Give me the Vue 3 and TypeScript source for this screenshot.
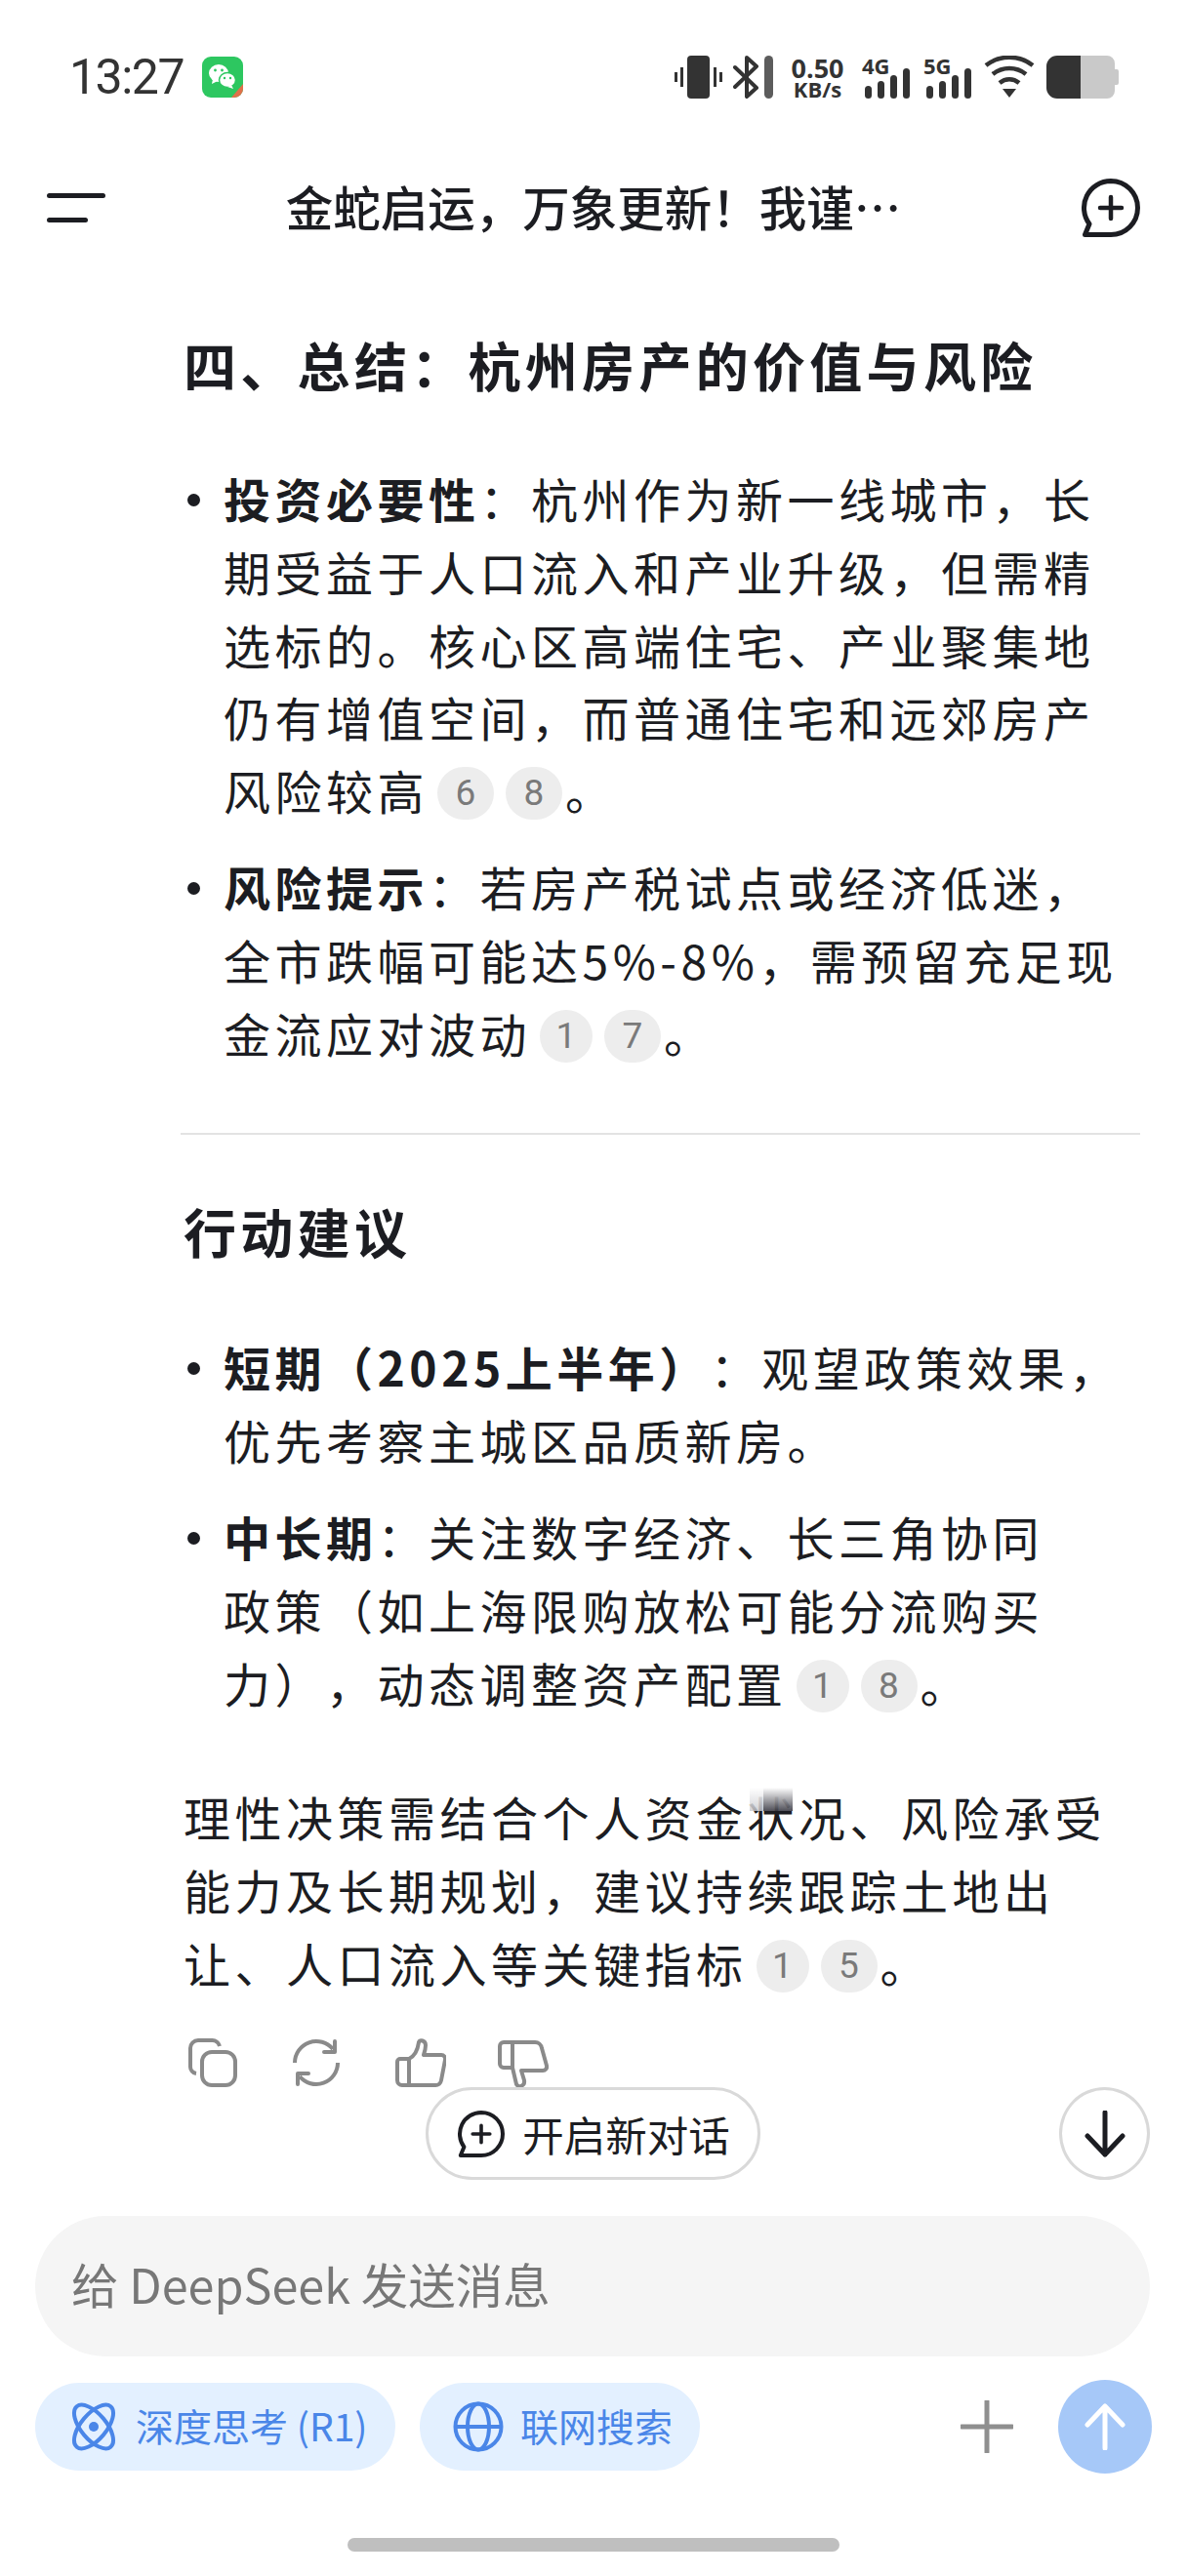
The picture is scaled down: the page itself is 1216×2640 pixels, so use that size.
<script setup lang="ts">
type Seg = { t: string; b?: boolean } | { c: string; w: number };

const list1: Seg[][] = [
  [{ t: "投资必要性", b: true }, { t: "：杭州作为新一线城市，长\n期受益于人口流入和产业升级，但需精\n选标的。核心区高端住宅、产业聚集地\n仍有增值空间，而普通住宅和远郊房产\n风险较高" }, { c: "6", w: 58 }, { c: "8", w: 58 }, { t: "。" }],
  [{ t: "风险提示", b: true }, { t: "：若房产税试点或经济低迷，\n全市跌幅可能达5%-8%，需预留充足现\n金流应对波动" }, { c: "1", w: 54 }, { c: "7", w: 58 }, { t: "。" }],
];
const list2: Seg[][] = [
  [{ t: "短期（2025上半年）", b: true }, { t: "：观望政策效果，\n优先考察主城区品质新房。" }],
  [{ t: "中长期", b: true }, { t: "：关注数字经济、长三角协同\n政策（如上海限购放松可能分流购买\n力），动态调整资产配置" }, { c: "1", w: 54 }, { c: "8", w: 58 }, { t: "。" }],
];
</script>

<template>
  <div class="page">
    <div class="status">
      <div class="status-left">
        <span class="time">13:27</span>
        <svg class="wechat" width="42" height="42" viewBox="0 0 42 42">
          <rect width="42" height="42" rx="9" fill="#2dc760" />
          <path d="M42 28v5a9 9 0 0 1-9 9h-3z" fill="#e0704a" />
          <ellipse cx="17" cy="17" rx="10" ry="9" fill="#fff" />
          <path d="M11 23l-1 5 6-3z" fill="#fff" />
          <ellipse cx="26" cy="24" rx="8.5" ry="7.5" fill="#fff" stroke="#2dc760" stroke-width="1.5" />
          <path d="M30 29l2 4-6-2z" fill="#fff" />
          <circle cx="13.5" cy="14" r="1.4" fill="#2dc760" />
          <circle cx="20.5" cy="14" r="1.4" fill="#2dc760" />
          <circle cx="23" cy="22" r="1.2" fill="#2dc760" />
          <circle cx="29" cy="22" r="1.2" fill="#2dc760" />
        </svg>
      </div>
      <div class="status-right">
        <svg width="49" height="44" viewBox="0 0 49 44" class="s-vib">
          <rect x="13" width="23" height="44" rx="4" fill="#333" />
          <path d="M1.5 17v10M7.5 12v20M41.5 12v20M47.5 17v10" stroke="#333" stroke-width="3" />
        </svg>
        <svg width="41" height="44" viewBox="0 0 41 44" class="s-bt">
          <path d="M2 12l22 21-10 9V2l10 9L2 32" fill="none" stroke="#333" stroke-width="4" stroke-linejoin="round" stroke-linecap="round" />
          <rect x="32" y="0" width="9" height="44" rx="4.5" fill="#5c5c5c" />
        </svg>
        <div class="speed"><span class="speed-a">0.50</span><span class="speed-b">KB/s</span></div>
        <div class="sig sig-4">
          <span class="sig-t">4G</span>
          <svg width="50" height="44" viewBox="0 0 50 44">
            <rect x="3" y="31" width="7" height="13" rx="3.5" fill="#333" />
            <rect x="16" y="26" width="7" height="18" rx="3.5" fill="#333" />
            <rect x="29" y="20" width="7" height="24" rx="3.5" fill="#333" />
            <rect x="42" y="13" width="7" height="31" rx="3.5" fill="#333" />
          </svg>
        </div>
        <div class="sig sig-5">
          <span class="sig-t">5G</span>
          <svg width="50" height="44" viewBox="0 0 50 44">
            <rect x="3" y="31" width="7" height="13" rx="3.5" fill="#333" />
            <rect x="16" y="26" width="7" height="18" rx="3.5" fill="#333" />
            <rect x="29" y="20" width="7" height="24" rx="3.5" fill="#333" />
            <rect x="42" y="13" width="7" height="31" rx="3.5" fill="#333" />
          </svg>
        </div>
        <svg width="52" height="44" viewBox="0 0 52 44" class="s-wifi">
          <path d="M2 10C16 -1 36 -1 50 10M9 19C19 11 33 11 43 19M16 28C22 23 30 23 36 28" fill="none" stroke="#333" stroke-width="4.5" />
          <path d="M19 34h14l-7 9z" fill="#333" />
        </svg>
        <svg width="74" height="44" viewBox="0 0 74 44" class="s-bat">
          <path d="M35 0h27a8 8 0 0 1 8 8v6h2a2 2 0 0 1 2 2v12a2 2 0 0 1-2 2h-2v6a8 8 0 0 1-8 8H35z" fill="#c9c9c9" />
          <path d="M35 0H11A11 11 0 0 0 0 11v22a11 11 0 0 0 11 11h24z" fill="#333" />
        </svg>
      </div>
    </div>

    <header class="top">
      <svg width="60" height="30" viewBox="0 0 60 30" class="menu">
        <rect y="0" width="60" height="5" rx="2.5" fill="#1c1d22" />
        <rect y="25" width="42" height="5" rx="2.5" fill="#1c1d22" />
      </svg>
      <div class="title">金蛇启运，万象更新！我谨…</div>
      <svg width="60" height="60" viewBox="0 0 60 60" class="newchat">
        <path d="M30 2.500a27.500 27.500 0 0 1 0 55H3.500l4.500-11A27.500 27.500 0 0 1 30 2.500z" fill="none" stroke="#1c1d22" stroke-width="5" stroke-linejoin="round" />
        <path d="M30 19v22M19 30h22" stroke="#1c1d22" stroke-width="4.500" stroke-linecap="round" />
      </svg>
    </header>

    <main class="content">
      <h2 class="h-first">四、总结：杭州房产的价值与风险</h2>
      <ul class="list">
        <li v-for="(item, i) in list1" :key="i">
          <template v-for="(s, j) in item" :key="j">
            <b v-if="'t' in s && s.b">{{ s.t }}</b>
            <template v-else-if="'t' in s">{{ s.t }}</template>
            <span v-else class="cite" :style="{ width: s.w + 'px' }">{{ s.c }}</span>
          </template>
        </li>
      </ul>
      <hr class="rule" />
      <h3 class="h-second">行动建议</h3>
      <ul class="list list-second">
        <li v-for="(item, i) in list2" :key="i">
          <template v-for="(s, j) in item" :key="j">
            <b v-if="'t' in s && s.b">{{ s.t }}</b>
            <template v-else-if="'t' in s">{{ s.t }}</template>
            <span v-else class="cite" :style="{ width: s.w + 'px' }">{{ s.c }}</span>
          </template>
        </li>
      </ul>
      <p class="para">理性决策需结合个人资金状况、风险承受
能力及长期规划，建议持续跟踪土地出
让、人口流入等关键指标<span class="cite" style="width: 54px">1</span><span class="cite" style="width: 58px">5</span>。</p>
      <div class="actions">
        <svg width="50" height="50" viewBox="0 0 50 50">
          <path d="M8 36a7 7 0 0 1-6-7V10a8 8 0 0 1 8-8h14a8 8 0 0 1 8 6" fill="none" stroke="#8a8a8a" stroke-width="4" />
          <rect x="14" y="14" width="34" height="34" rx="10" fill="none" stroke="#8a8a8a" stroke-width="4" />
        </svg>
        <svg width="50" height="50" viewBox="0 0 50 50">
          <path d="M3 25A22 22 0 0 1 42 11M47 25A22 22 0 0 1 8 39" fill="none" stroke="#8a8a8a" stroke-width="4" />
          <path d="M44 3v11H33M6 47V36h11" fill="none" stroke="#8a8a8a" stroke-width="4" stroke-linejoin="round" stroke-linecap="round" />
        </svg>
        <svg width="52" height="50" viewBox="0 0 52 50">
          <path d="M2 24a3 3 0 0 1 3-3h9v27H7a5 5 0 0 1-5-5zM14 21c6-3 9-10 10-17 1-3 7-2 7 3 0 4-1 7-2 10h18a4 4 0 0 1 4 5l-4 21a6 6 0 0 1-6 5H14" fill="none" stroke="#8a8a8a" stroke-width="4" stroke-linejoin="round" />
        </svg>
        <svg width="52" height="50" viewBox="0 0 52 50" class="thumb-down">
          <path d="M2 6a4 4 0 0 1 4-4h9v26H6a4 4 0 0 1-4-4zM15 2h23a7 7 0 0 1 7 6l5 18a4 4 0 0 1-4 5H24l3 10c1 6-6 8-8 4l-4-17" fill="none" stroke="#8a8a8a" stroke-width="4" stroke-linejoin="round" />
        </svg>
      </div>
    </main>

    <div class="glitch"></div>

    <div class="float-row">
      <div class="new-btn">
        <svg width="48" height="48" viewBox="0 0 60 60">
          <path d="M30 2.500a27.500 27.500 0 0 1 0 55H3.500l4.500-11A27.500 27.500 0 0 1 30 2.500z" fill="none" stroke="#1c1d22" stroke-width="5" stroke-linejoin="round" />
          <path d="M30 19v22M19 30h22" stroke="#1c1d22" stroke-width="4.500" stroke-linecap="round" />
        </svg>
        <span>开启新对话</span>
      </div>
      <div class="down-btn">
        <svg width="42" height="48" viewBox="0 0 42 48">
          <path d="M21 2v43M3 26l18 19 18-19" fill="none" stroke="#1c1d22" stroke-width="5" stroke-linejoin="round" stroke-linecap="round" />
        </svg>
      </div>
    </div>

    <div class="input">给 DeepSeek 发送消息</div>

    <div class="tools">
      <div class="chip chip-r1">
        <svg width="52" height="50" viewBox="0 0 52 50">
          <ellipse cx="26" cy="25" rx="13" ry="27" transform="rotate(-40 26 25)" fill="none" stroke="#4a86e8" stroke-width="4" />
          <ellipse cx="26" cy="25" rx="13" ry="27" transform="rotate(40 26 25)" fill="none" stroke="#4a86e8" stroke-width="4" />
          <circle cx="26" cy="25" r="5" fill="#4a86e8" />
        </svg>
        <span>深度思考 (R1)</span>
      </div>
      <div class="chip chip-web">
        <svg width="52" height="52" viewBox="0 0 52 52">
          <circle cx="26" cy="26" r="23.500" fill="none" stroke="#4a86e8" stroke-width="4" />
          <ellipse cx="26" cy="26" rx="11" ry="23.500" fill="none" stroke="#4a86e8" stroke-width="4" />
          <path d="M3 26h46" stroke="#4a86e8" stroke-width="4" />
        </svg>
        <span>联网搜索</span>
      </div>
      <svg class="plus" width="54" height="54" viewBox="0 0 54 54">
        <path d="M27 1v52M1 27h52" stroke="#8f8f8f" stroke-width="5" stroke-linecap="round" />
      </svg>
      <div class="send">
        <svg width="42" height="48" viewBox="0 0 42 48">
          <path d="M21 46V3M3 22L21 3l18 19" fill="none" stroke="#fff" stroke-width="5" stroke-linejoin="round" stroke-linecap="round" />
        </svg>
      </div>
    </div>

    <div class="home"></div>
  </div>
</template>

<style scoped>
.page {
  position: relative;
  width: 1216px;
  height: 2640px;
  overflow: hidden;
  background: #fff;
  color: #1c1d22;
  font-family: "Noto Sans CJK SC", "Noto Sans", sans-serif;
  display: flex;
  flex-direction: column;
}
.status {
  height: 44px;
  margin-top: 57px;
  padding: 0 70px 0 71px;
  display: flex;
  justify-content: space-between;
  align-items: center;
}
.status-left { display: flex; align-items: center; gap: 19px; }
.time { font: 400 50px/44px Roboto, sans-serif; color: #333; letter-spacing: -1.500px; }
.status-right { display: flex; align-items: center; }
.s-bt { margin-left: 11px; }
.speed { margin-left: 19px; width: 53px; display: flex; flex-direction: column; align-items: center; font-family: "Open Sans", sans-serif; font-weight: 700; color: #333; line-height: 1; white-space: nowrap; }
.speed-a { font-size: 27px; line-height: 25px; }
.speed-b { font-size: 22px; line-height: 19px; }
.sig { position: relative; width: 50px; height: 44px; }
.sig svg { display: block; }
.sig-4 { margin-left: 19px; }
.sig-5 { margin-left: 13px; }
.sig-t { position: absolute; left: 0; top: 0; font: 700 22px/20px "Open Sans", sans-serif; color: #333; }
.s-wifi { margin-left: 12px; }
.s-bat { margin-left: 12px; }

.top {
  height: 60px;
  margin-top: 82px;
  display: flex;
  align-items: center;
  padding: 0 48px;
}
.menu { flex: none; }
.title { flex: 1; text-align: center; font-size: 48.500px; line-height: 56px; padding-bottom: 4px; font-weight: 500; white-space: nowrap; }
.newchat { flex: none; }

.content {
  flex: 1;
  min-height: 0;
  padding: 0 48px 0 188px;
  font-size: 48px;
  line-height: 74.800px;
  letter-spacing: 4.500px;
  text-spacing-trim: space-all;
}
h2, h3 { margin: 0; font-weight: 700; font-size: 54px; line-height: 75px; letter-spacing: 4.300px; }
.h-first { margin-top: 93px; }
.list { list-style: none; margin: 62px 0 0; padding: 0 0 0 41px; }
.list-second { margin-top: 64px; }
.list li { position: relative; margin-bottom: 24px; white-space: pre-line; }
.list li::before {
  content: "";
  position: absolute;
  left: -37px;
  top: 33px;
  width: 13px;
  height: 13px;
  border-radius: 50%;
  background: #1c1d22;
}
.cite {
  display: inline-flex;
  justify-content: center;
  align-items: center;
  height: 54px;
  margin: 0 3px 0 9px;
  vertical-align: 5px;
  border-radius: 27px;
  background: #ededed;
  color: #7a7a7a;
  font: 37px/54px Roboto, sans-serif;
  letter-spacing: 0;
}
.rule { margin: 66px 0 0 -3px; border: 0; height: 2px; background: #e3e3e3; }
.h-second { margin-top: 61px; }
.para { margin: 63px 0 0 0; white-space: pre-line; }
.actions { display: flex; align-items: flex-start; gap: 56px; margin: 40px 0 0 5px; }
.actions svg { flex: none; }
.thumb-down { margin: 2px 0 0 -3px; }

/* the blurred patch over 状 in the screenshot */
.glitch {
  position: absolute;
  left: 768px;
  top: 1832px;
  width: 44px;
  height: 24px;
  background:
    linear-gradient(to bottom, rgba(255, 255, 255, 0.95), rgba(60, 60, 70, 0.9)) 14px 0 / 30px 100% no-repeat,
    linear-gradient(to bottom, rgba(255, 255, 255, 0.95), rgba(200, 200, 205, 0.8)) 0 0 / 14px 100% no-repeat;
}

.float-row {
  position: absolute;
  left: 436px;
  right: 38px;
  top: 2139px;
  display: flex;
  justify-content: space-between;
}
.new-btn {
  width: 343px;
  height: 95px;
  box-sizing: border-box;
  border: 3px solid #d9d9d9;
  border-radius: 48px;
  background: #fff;
  display: flex;
  align-items: center;
  justify-content: center;
  gap: 18px;
  padding-left: 2px;
  font-size: 42.500px;
}
.down-btn {
  width: 93px;
  height: 95px;
  box-sizing: border-box;
  border: 3px solid #d9d9d9;
  border-radius: 50%;
  background: #fff;
  display: flex;
  align-items: center;
  justify-content: center;
}
.input {
  height: 144px;
  margin: 0 38px 27px 36px;
  padding-left: 37px;
  border-radius: 72px;
  background: #f5f5f5;
  color: #777;
  font-size: 48.500px;
  line-height: 138px;
}
.tools {
  height: 90px;
  margin: 0 36px 108px;
  display: flex;
  align-items: center;
}
.chip {
  height: 90px;
  border-radius: 45px;
  background: #e3f0ff;
  color: #4a86e8;
  display: flex;
  align-items: center;
  font-size: 39px;
  box-sizing: border-box;
}
.chip span { padding-bottom: 5px; }
.chip-r1 { width: 369px; padding-left: 34px; gap: 17px; }
.chip-web { width: 287px; margin-left: 25px; padding-left: 34px; gap: 17px; }
.plus { margin-left: auto; margin-right: 46px; }
.send {
  width: 96px;
  height: 96px;
  border-radius: 50%;
  background: #a6c8f8;
  display: flex;
  align-items: center;
  justify-content: center;
}
.home {
  position: absolute;
  left: 356px;
  top: 2601px;
  width: 504px;
  height: 14px;
  border-radius: 7px;
  background: #bfbfbf;
}
</style>

<style>
body { margin: 0; background: #fff; }
</style>
